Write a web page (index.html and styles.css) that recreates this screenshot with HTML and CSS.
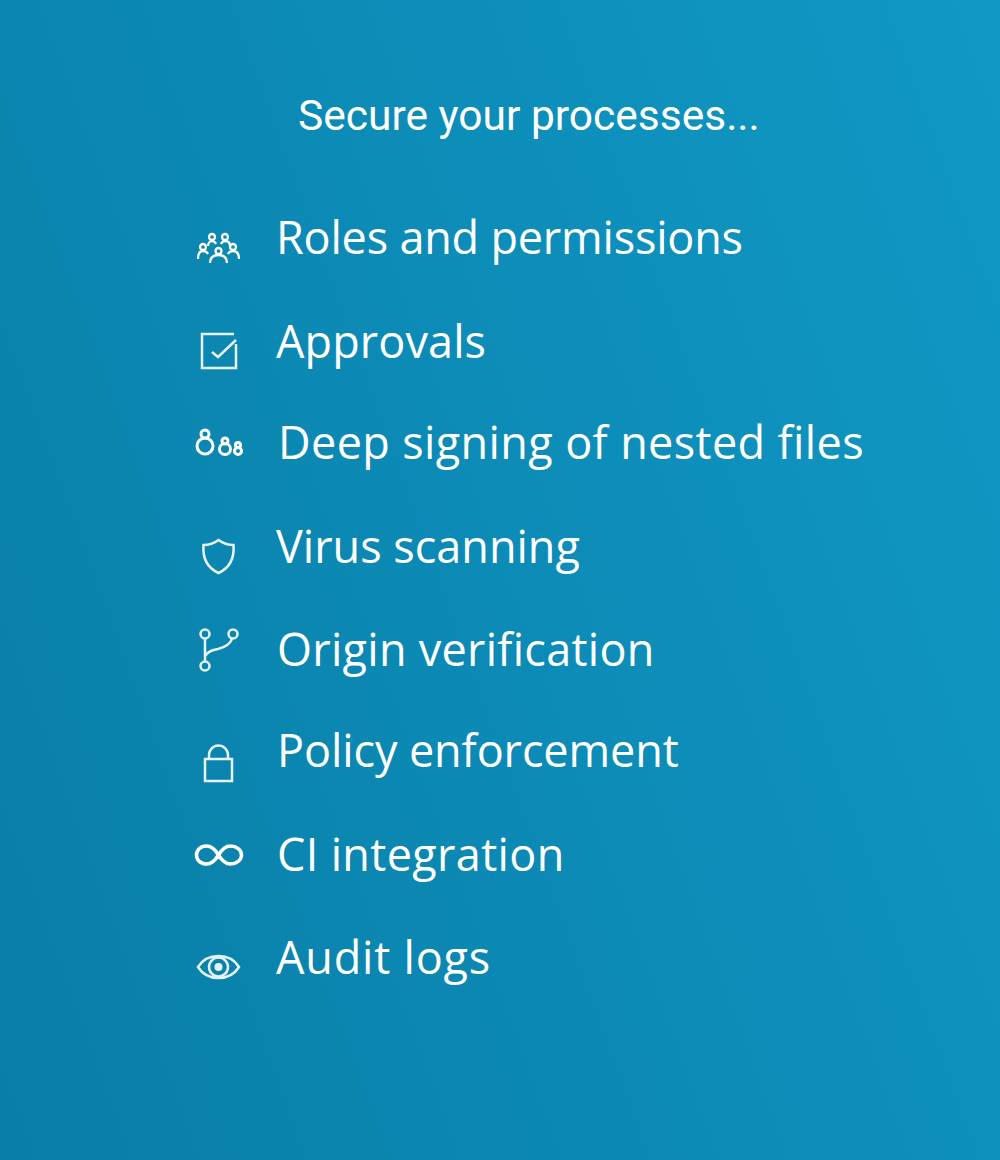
FILE: index.html
```html
<!DOCTYPE html>
<html lang="en">
<head>
<meta charset="utf-8">
<title>Secure your processes</title>
<link rel="stylesheet" href="styles.css">
</head>
<body>
<main class="panel">
  <h1 class="title">Secure your processes...</h1>
  <ul class="features">
    <li class="row h104">
      <svg class="icon" viewBox="0 0 50 60"><g class="s2">
        <circle cx="18" cy="27" r="3"/><circle cx="31" cy="27" r="3"/>
        <circle cx="9" cy="37" r="3"/><circle cx="24.500" cy="41" r="3"/><circle cx="39" cy="37" r="3"/>
        <path d="M4 49c0-5 2-8 5-8s4 1 5 3M45 49c0-5-2-8-6-8-2 0-4 1-5 3M16 53c0-5 3-8 8.500-8s8.500 3 8.500 8M14 36c0-3 2-5 4-5s3 1 4 3M36 36c0-3-2-5-5-5-2 0-3 1-4 3"/>
      </g></svg>
      <span class="label ls-roles">Roles and permissions</span>
    </li>
    <li class="row h101">
      <svg class="icon" viewBox="0 0 50 60"><g class="s25">
        <path d="M42 30V54H8V20H40"/><path d="M18 38l6 5 18-17"/>
      </g></svg>
      <span class="label ls-approvals">Approvals</span>
    </li>
    <li class="row h104">
      <svg class="icon" viewBox="0 0 50 60"><g class="s3">
        <circle cx="11" cy="31" r="8"/><circle cx="11" cy="19" r="4"/>
        <circle cx="31" cy="34" r="5.500"/><circle cx="31" cy="26" r="3"/>
        <circle cx="44" cy="36" r="3.500"/><circle cx="44" cy="30" r="2.500"/>
      </g></svg>
      <span class="label nudge2 ls-deep">Deep signing of nested files</span>
    </li>
    <li class="row h103">
      <svg class="icon" viewBox="0 0 50 60"><g class="s25">
        <path d="M24.500 21c4 3 9 5 15 5 1 13-4 23-15 28-11-5-16-15-15-28 6 0 11-2 15-5z"/>
      </g></svg>
      <span class="label">Virus scanning</span>
    </li>
    <li class="row h101">
      <svg class="icon" viewBox="0 0 50 60"><g class="s25">
        <circle cx="11" cy="12" r="4.500"/><circle cx="39" cy="12" r="4.500"/><circle cx="11" cy="44" r="4.500"/>
        <path d="M11 17V39M11 34c3-5 8-6 13-7 8-2 12-5 14-10"/>
      </g></svg>
      <span class="label nudge1 ls-origin">Origin verification</span>
    </li>
    <li class="row h104">
      <svg class="icon" viewBox="0 0 50 60"><g class="s25">
        <rect x="11" y="36" width="27" height="22"/><path d="M15 36v-4a9.500 9.500 0 0 1 19 0v4"/>
      </g></svg>
      <span class="label nudge1 ls-policy">Policy enforcement</span>
    </li>
    <li class="row h103">
      <svg class="icon" viewBox="0 0 50 60"><g class="s35">
        <path d="M24.500 28c-3-5-7-9-12-9-6 0-10 4-10 9s4 9 10 9c5 0 9-4 12-9s7-9 12-9c6 0 11 4 11 9s-5 9-11 9c-5 0-9-4-12-9z"/>
      </g></svg>
      <span class="label nudge1 ls-ci">CI integration</span>
    </li>
    <li class="row">
      <svg class="icon" viewBox="0 0 50 60"><g class="s25">
        <path d="M4 37c5-8 12-11 20.500-11s15.500 3 20.500 11c-5 8-12 11-20.500 11s-15.500-3-20.500-11z"/><circle cx="24.500" cy="37" r="9.500"/><circle class="dot" cx="24.500" cy="37" r="4"/>
      </g></svg>
      <span class="label ls-audit">Audit logs</span>
    </li>
  </ul>
</main>
</body>
</html>
```
FILE: styles.css
```css
html, body { margin: 0; padding: 0; }
.panel {
  width: 1000px;
  height: 1160px;
  box-sizing: border-box;
  padding-top: 90px;
  overflow: hidden;
  color: #fff;
  background: linear-gradient(70deg, #097ea6 0%, #0c8bb6 50%, #1198c5 100%);
}
.title {
  margin: 0;
  padding-left: 298px;
  font: 400 42.5px/52px Roboto, sans-serif;
  white-space: nowrap;
}
.features {
  list-style: none;
  margin: 0;
  padding: 67px 0 0 194px;
}
.row { display: flex; gap: 32px; height: 103px; align-items: flex-start; }
.row .icon { margin-top: 1px; }
.h104 { height: 104px; }
.h103 { height: 103px; }
.h101 { height: 101px; }
.icon { width: 50px; height: 60px; flex: none; margin-right: 1px; }
.icon g { fill: none; stroke: #fff; }
.s2 { stroke-width: 2.3; }
.s25 { stroke-width: 2.5; opacity: .9; }
.s3 { stroke-width: 3; }
.s35 { stroke-width: 3.5; }
.dot { fill: #fff; stroke: none; }
.label {
  font: 400 45px/56px "Open Sans", sans-serif;
  white-space: nowrap;
  margin-left: -1px;
}
.nudge1 { margin-left: 0; }
.nudge2 { margin-left: 1px; }
.ls-roles { letter-spacing: -0.2px; }
.ls-approvals { letter-spacing: 0.1px; }
.ls-deep { letter-spacing: 0.37px; }
.ls-origin { letter-spacing: 0.27px; }
.ls-policy { letter-spacing: -0.1px; }
.ls-ci { letter-spacing: 0.35px; }
.ls-audit { letter-spacing: 0.8px; }
```
